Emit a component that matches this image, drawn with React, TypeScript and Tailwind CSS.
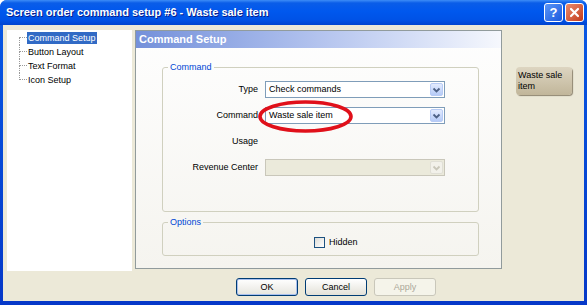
import React from 'react';

const treeItems = ['Command Setup', 'Button Layout', 'Text Format', 'Icon Setup'];

function Chevron({ disabled }: { disabled?: boolean }) {
  return (
    <svg width="9" height="6" viewBox="0 0 9 6">
      <path
        d="M1.5 1.5 L4.5 4.5 L7.5 1.5"
        fill="none"
        stroke={disabled ? '#C9C7BA' : '#4D6185'}
        strokeWidth="1.8"
      />
    </svg>
  );
}

function Combo({ value, disabled }: { value?: string; disabled?: boolean }) {
  return (
    <div
      className={
        disabled
          ? 'h-[17px] w-[180px] flex items-center border border-[#C9C7BA] bg-[#EBEADB]'
          : 'h-[17px] w-[180px] flex items-center border border-[#7F9DB9] bg-white'
      }
    >
      <span className="flex-1 pl-[3px] text-[9px] leading-[11px] text-black truncate">{value}</span>
      <div
        className={
          disabled
            ? 'w-[13px] h-[13px] mr-[1px] flex items-center justify-center rounded-[2px] border border-[#E0DFD6] bg-[#F2F1EA]'
            : 'w-[13px] h-[13px] mr-[1px] flex items-center justify-center rounded-[2px] border border-[#B7CBF5] bg-gradient-to-b from-[#E3EBFE] to-[#B6CBF7]'
        }
      >
        <Chevron disabled={disabled} />
      </div>
    </div>
  );
}

function Row({ label, children }: { label: string; children?: React.ReactNode }) {
  return (
    <div className="h-[17px] grid grid-cols-[95px_180px] gap-x-[7px] items-center">
      <span className="text-right text-[9px] leading-[11px] text-black">{label}</span>
      {children}
    </div>
  );
}

export default function App() {
  return (
    <div className="w-[587px] h-[305px] bg-white font-['Liberation_Sans',Arial,sans-serif]">
      <div className="w-full h-full flex flex-col rounded-t-[7px] overflow-hidden bg-gradient-to-b from-[#0A5AE6] to-[#0638C8]">
        {/* Title bar */}
        <div className="h-[25px] flex items-center pl-[6px] pr-[3px] bg-[linear-gradient(to_bottom,#3D8DF7,#0A5DE8_12%,#0058EE_45%,#0052E6_80%,#0044CF)]">
          <span className="flex-1 text-white text-[11px] font-bold leading-[13px] [text-shadow:1px_1px_#0A1E8A]">
            Screen order command setup #6 - Waste sale item
          </span>
          <div className="flex gap-[2px]">
            <div className="w-[19px] h-[19px] rounded-[3px] border border-white bg-gradient-to-br from-[#5A95F7] to-[#1B58DD] flex items-center justify-center text-white text-[13px] font-bold leading-none">
              ?
            </div>
            <div className="w-[19px] h-[19px] rounded-[3px] border border-white bg-gradient-to-br from-[#E98A6B] to-[#C2391A] flex items-center justify-center">
              <svg width="11" height="11" viewBox="0 0 11 11">
                <path d="M2 2 L9 9 M9 2 L2 9" stroke="white" strokeWidth="2.2" strokeLinecap="round" />
              </svg>
            </div>
          </div>
        </div>

        {/* Body */}
        <div className="flex-1 mx-[3px] mb-[4px] bg-[#ECE9D8] flex flex-col pt-[5px] pl-[4px]">
          <div className="flex">
            {/* Tree */}
            <div className="w-[125px] h-[241px] bg-white pt-[1px] pl-[12px] flex flex-col">
              {treeItems.map((item, i) => (
                <div key={item} className="h-[14px] flex items-stretch">
                  <div className="w-[8px] flex flex-col">
                    <div
                      className={
                        i === 0
                          ? 'h-1/2 border-b border-dotted border-[#9A9A9A]'
                          : 'h-1/2 border-b border-l border-dotted border-[#9A9A9A]'
                      }
                    />
                    <div
                      className={
                        i === treeItems.length - 1 ? 'h-1/2' : 'h-1/2 border-l border-dotted border-[#9A9A9A]'
                      }
                    />
                  </div>
                  <div className="flex items-center">
                    <span
                      className={
                        i === 0
                          ? 'px-[1px] h-[12px] flex items-center bg-[#316AC5] text-white text-[9px] leading-[11px]'
                          : 'px-[1px] h-[12px] flex items-center text-black text-[9px] leading-[11px]'
                      }
                    >
                      {item}
                    </span>
                  </div>
                </div>
              ))}
            </div>

            {/* Property page */}
            <div className="ml-[3px] w-[367px] h-[239px] border border-[#919B9C] bg-gradient-to-b from-[#FEFEFE] to-[#F5F4EF] flex flex-col">
              <div className="h-[17px] flex items-center pl-[3px] bg-gradient-to-r from-[#7490DA] via-[#B3C3EE] to-[#F6F8FD] text-white text-[11px] font-bold leading-[13px]">
                Command Setup
              </div>

              <fieldset className="mt-[14px] ml-[26px] mr-[22px] border border-[#D0D0BF] rounded-[3px] px-0 pt-[8px] pb-[35px] flex flex-col gap-[9px]">
                <legend className="ml-[5px] px-[2px] text-[9px] leading-[11px] text-[#0046D5]">Command</legend>
                <Row label="Type">
                  <Combo value="Check commands" />
                </Row>
                <Row label="Command">
                  <div className="relative">
                    <Combo value="Waste sale item" />
                    <svg
                      className="absolute left-[-7px] top-[-7px]"
                      width="95"
                      height="33"
                      viewBox="0 0 95 33"
                    >
                      <ellipse cx="47.5" cy="16.5" rx="45.5" ry="14.5" fill="none" stroke="#E0101A" strokeWidth="3.6" />
                    </svg>
                  </div>
                </Row>
                <Row label="Usage" />
                <Row label="Revenue Center">
                  <Combo disabled />
                </Row>
              </fieldset>

              <fieldset className="mt-[5px] ml-[26px] mr-[22px] border border-[#D0D0BF] rounded-[3px] px-0 pt-[9px] pb-[7px]">
                <legend className="ml-[5px] px-[2px] text-[9px] leading-[11px] text-[#0046D5]">Options</legend>
                <div className="pl-[151px] flex items-center gap-[4px]">
                  <div className="w-[11px] h-[11px] border border-[#1C5180] bg-gradient-to-br from-[#DCDCD7] to-white" />
                  <span className="text-[9px] leading-[11px] text-black">Hidden</span>
                </div>
              </fieldset>
            </div>

            {/* Button preview */}
            <div className="ml-[14px] mt-[37px]">
              <div className="w-[56px] h-[28px] pl-[2px] pt-[3px] rounded-[4px] bg-gradient-to-b from-[#DDD5C1] to-[#C1B69A] shadow-[1px_1px_1px_#8F8570] text-[9px] leading-[11px] text-black">
                Waste sale
                <br />
                item
              </div>
            </div>
          </div>

          {/* Dialog buttons */}
          <div className="mt-[7px] pl-[229px] flex gap-[7px]">
            <button className="w-[62px] h-[18px] rounded-[3px] border border-[#003C74] bg-gradient-to-b from-white to-[#E6E5DE] shadow-[inset_0_0_0_1px_#A9C0EE] text-[9px] leading-[11px] text-black">
              OK
            </button>
            <button className="w-[62px] h-[18px] rounded-[3px] border border-[#003C74] bg-gradient-to-b from-white to-[#E3E1D8] text-[9px] leading-[11px] text-black">
              Cancel
            </button>
            <button className="w-[62px] h-[18px] rounded-[3px] border border-[#C9C7BA] bg-[#F5F4EA] text-[9px] leading-[11px] text-[#ACA899]">
              Apply
            </button>
          </div>
        </div>
      </div>
    </div>
  );
}
